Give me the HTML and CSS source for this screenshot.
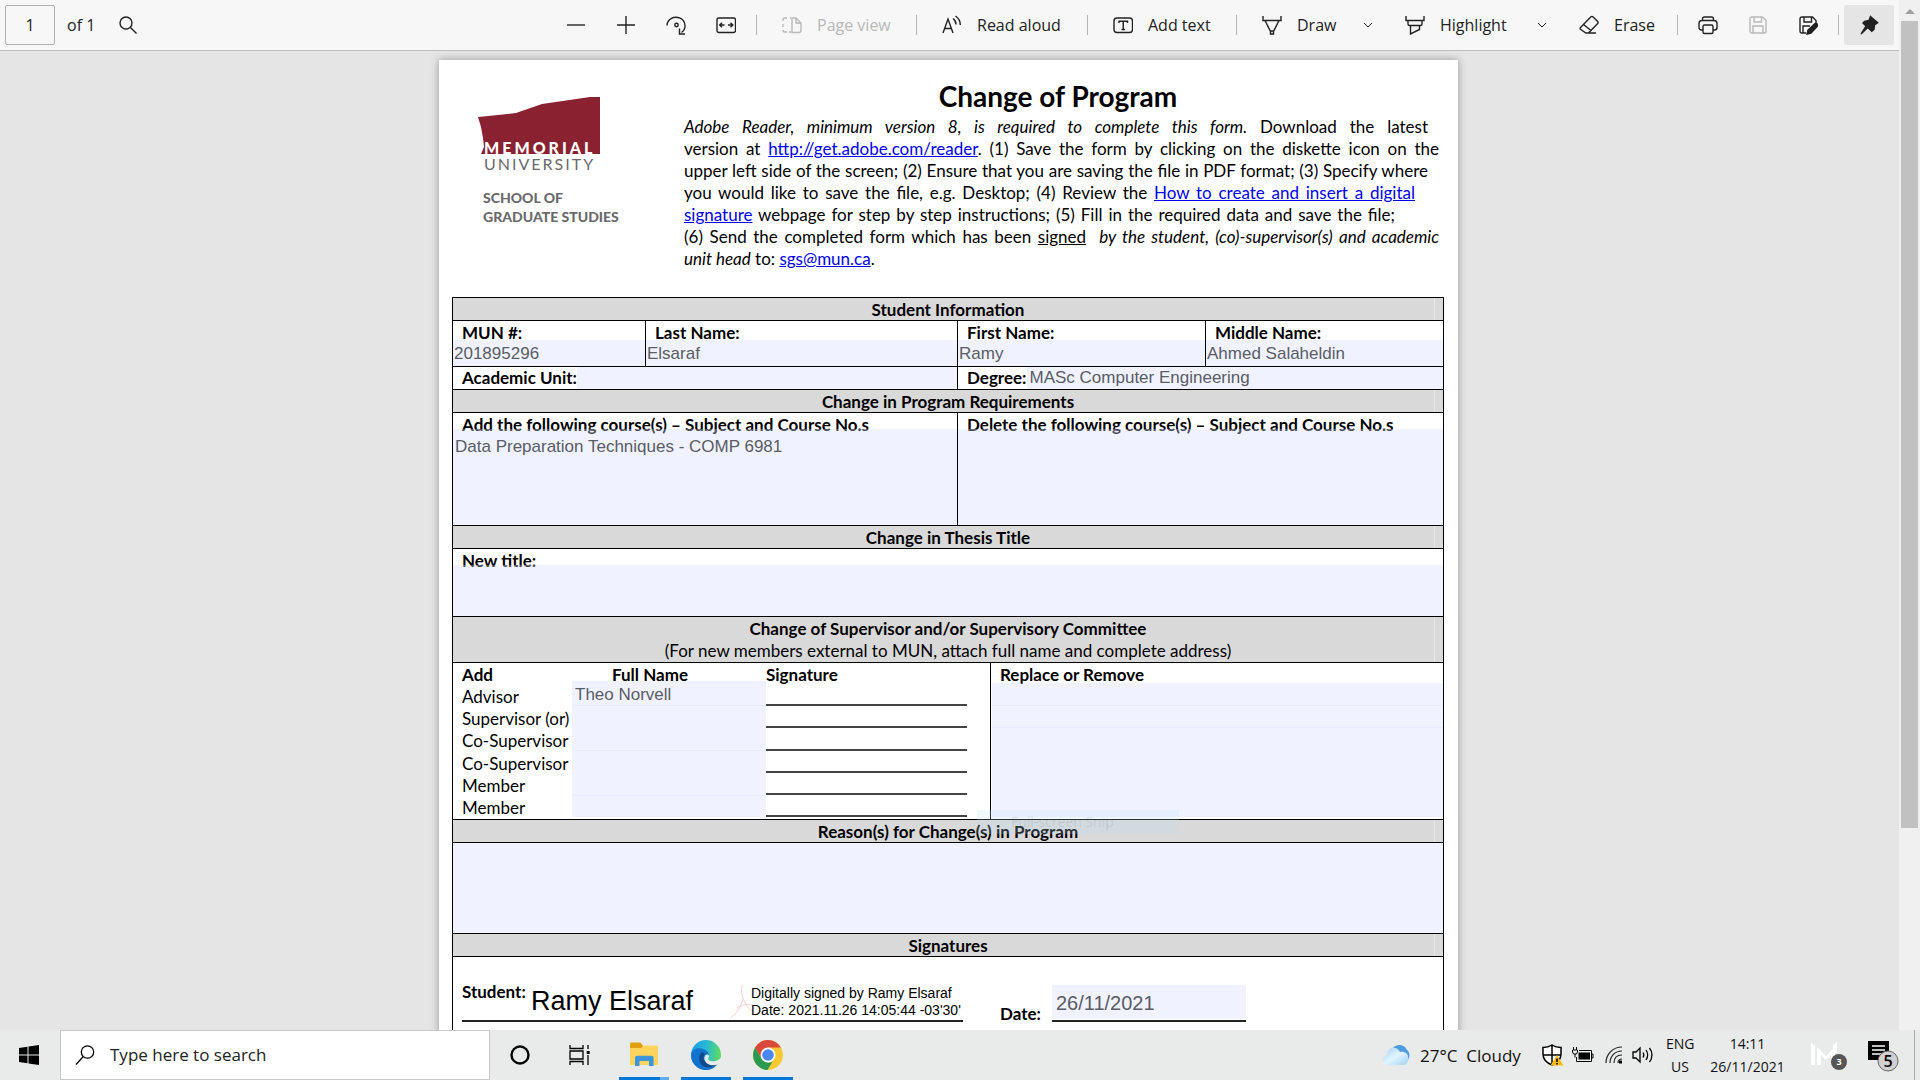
FILE: index.html
```html
<!DOCTYPE html>
<html lang="en">
<head>
<meta charset="utf-8">
<title>Change of Program</title>
<link rel="stylesheet" href="styles.css">
</head>
<body>
<div class="screen">
  <div class="browser">
    <div class="viewer">
      <header class="toolbar">
        <input class="page-number" type="text" value="1" aria-label="Page number">
        <span class="page-total">of 1</span>
        <button class="find" aria-label="Find"><svg viewBox="0 0 20 20"><circle cx="8" cy="8" r="6"/><path d="M12.500 12.500 18.500 18.500"/></svg></button>
        <div class="tools">
          <button class="tool" aria-label="Zoom out"><svg viewBox="0 0 20 20"><path d="M1 10h18"/></svg></button>
          <button class="tool" aria-label="Zoom in"><svg viewBox="0 0 20 20"><path d="M1 10h18M10 1v18"/></svg></button>
          <button class="tool" aria-label="Rotate"><svg viewBox="0 0 20 20"><path d="M1 10.500A9 8.500 0 1 1 15.500 17.500M13.500 13.500V19H19"/><circle cx="10.500" cy="10" r="1.700"/></svg></button>
          <button class="tool" aria-label="Fit to width"><svg viewBox="0 0 20 20"><rect x="1" y="3" width="18.500" height="14.500" rx="2"/><path d="M4 10h4.500M6 7.700 3.700 10 6 12.300M16.500 10H12M14.500 7.700 16.800 10 14.500 12.300"/></svg></button>
          <span class="sep"></span>
          <button class="tool text w-view" disabled><svg viewBox="0 0 20 20"><path d="M9 3H8M5 3H3a2 2 0 0 0-2 2v1M1 9v3M1 15a2 2 0 0 0 2 2h2M7 17h2M10 3h4l5 5v7.500a2 2 0 0 1-2 2h-7zM14 3v5h5"/></svg>Page view</button>
          <span class="sep"></span>
          <button class="tool text w-read"><svg viewBox="0 0 20 20"><path d="M1 18 6 4l5 14M2.600 13.500h6.800M11 3.500c2 1.500 3 3.500 3 6M13.500 1c3 2 4.800 5 4.800 9"/></svg>Read aloud</button>
          <span class="sep"></span>
          <button class="tool text w-add"><svg viewBox="0 0 20 20"><rect x="1" y="3" width="18.500" height="14.500" rx="3"/><path d="M6 8V6.200h8.500V8M10.250 6.200v8.300M8.500 14.500h3.500"/></svg>Add text</button>
          <span class="sep"></span>
          <button class="tool text w-draw"><svg viewBox="0 0 20 20"><path d="M1 1v4.500h18V1M3 5.500l5.500 11V19h3v-2.500l5.500-11M8.500 16h3"/></svg>Draw</button>
          <button class="tool chev" aria-label="Draw options"><svg viewBox="0 0 10 10"><path d="M1 3l4 4 4-4"/></svg></button>
          <button class="tool text w-mark"><svg viewBox="0 0 20 20"><path d="M1 1v4.500h18V1M3 5.500v3.500c0 1 .6 1.500 1.500 1.500h11c.9 0 1.500-.5 1.500-1.500V5.500M5.500 10.500V19l9-4.500v-4"/></svg>Highlight</button>
          <button class="tool chev" aria-label="Highlight options"><svg viewBox="0 0 10 10"><path d="M1 3l4 4 4-4"/></svg></button>
          <button class="tool text w-erase"><svg viewBox="0 0 20 20"><path d="M1.500 12.500 12 1.800c.6-.6 1.300-.6 1.900 0l4.800 4.700c.6.600.6 1.300 0 1.900L9.500 18H6.800l-5.300-3.700c-.6-.5-.6-1.200 0-1.800zM4.500 9.500l7.500 6M7 18h10"/></svg>Erase</button>
          <span class="sep"></span>
          <button class="tool" aria-label="Print"><svg viewBox="0 0 20 20"><path d="M5 15H3.500C2 15 1 14 1 12.500V8.500C1 6.500 2 5.500 4 5.500h12c2 0 3 1 3 3v4c0 1.500-1 2.500-2.500 2.500H15M4.500 5.500V4c0-1.500.7-2 2-2h7c1.300 0 2 .5 2 2v1.500"/><rect x="5" y="10" width="10" height="8.500" rx="1.500"/></svg></button>
          <button class="tool" aria-label="Save" disabled><svg viewBox="0 0 20 20"><path d="M2 4c0-1.300.7-2 2-2h10.500L18 5.500V16c0 1.300-.7 2-2 2H4c-1.300 0-2-.7-2-2zM6 2v5h7.500V2M5 18v-7h10v7"/></svg></button>
          <button class="tool" aria-label="Save as"><svg viewBox="0 0 20 20"><path d="M8 18H4c-1.300 0-2-.7-2-2V4c0-1.300.7-2 2-2h10.500L18 5.500V8M6 2v5h7.500V2M5 18v-7h7"/><path class="solid" d="m9 19 1-4 7-6.500c1.500-.8 3.500 1 2.300 2.700L13 18z"/></svg></button>
          <span class="sep"></span>
          <button class="tool pinned" aria-label="Unpin toolbar"><svg viewBox="0 0 20 20"><path class="solid" d="M11.500 1.500 18.700 7.700 15.500 10 15 14.500l-2.200 1.800-4-3.800L2 19l5-8-3-3L5.500 6.500l4.500-1z"/></svg></button>
        </div>
      </header>

      <main class="document">
        <form class="sheet">
          <div class="masthead">
            <div class="brand">
              <svg class="logo" viewBox="0 0 124 76" role="img" aria-label="Memorial University">
                <path fill="#8a2131" d="M0 20 20 18 38 16 64 7 112 0H122V57H3L6 50 5 41 3 30z"/>
                <text class="logo-top" x="6" y="57">MEMORIAL</text>
                <text class="logo-low" x="6" y="73">UNIVERSITY</text>
              </svg>
              <p class="school">SCHOOL OF<br>GRADUATE STUDIES</p>
            </div>
            <div class="intro">
              <h1>Change of Program</h1>
              <p class="lines">
                <span class="line mid"><i>Adobe Reader, minimum version 8, is required to complete this form.</i> Download the latest</span>
                <span class="line full">version at <a href="#reader">http://get.adobe.com/reader</a>. (1) Save the form by clicking on the diskette icon on the</span>
                <span class="line mid">upper left side of the screen; (2) Ensure that you are saving the file in PDF format; (3) Specify where</span>
                <span class="line short">you would like to save the file, e.g. Desktop; (4) Review the <a href="#how">How to create and insert a digital</a></span>
                <span class="line least"><a href="#how">signature</a> webpage for step by step instructions; (5) Fill in the required data and save the file;</span>
                <span class="line full">(6) Send the completed form which has been <u>signed</u>&nbsp; <i>by the student, (co)-supervisor(s) and academic</i></span>
                <span class="line last"><i>unit head</i> to: <a href="#mail">sgs@mun.ca</a>.</span>
              </p>
            </div>
          </div>

          <div class="form">
            <h2>Student Information</h2>
            <div class="row names">
              <div class="cell"><label for="mun">MUN #:</label><input id="mun" class="field" value="201895296"></div>
              <div class="cell"><label for="last">Last Name:</label><input id="last" class="field" value="Elsaraf"></div>
              <div class="cell"><label for="first">First Name:</label><input id="first" class="field" value="Ramy"></div>
              <div class="cell"><label for="middle">Middle Name:</label><input id="middle" class="field" value="Ahmed Salaheldin"></div>
            </div>
            <div class="row halves unit">
              <div class="cell inline"><label for="unit">Academic Unit:</label><input id="unit" class="field"></div>
              <div class="cell inline"><label for="degree">Degree:</label><input id="degree" class="field" value="MASc Computer Engineering"></div>
            </div>
            <h2>Change in Program Requirements</h2>
            <div class="row halves courses">
              <div class="cell"><label for="add">Add the following course(s) – Subject and Course No.s</label><textarea id="add" class="field">Data Preparation Techniques - COMP 6981</textarea></div>
              <div class="cell"><label for="del">Delete the following course(s) – Subject and Course No.s</label><textarea id="del" class="field"></textarea></div>
            </div>
            <h2>Change in Thesis Title</h2>
            <div class="row thesis">
              <div class="cell"><label for="title">New title:</label><textarea id="title" class="field"></textarea></div>
            </div>
            <h2 class="tall">Change of Supervisor and/or Supervisory Committee<br><span class="note">(For new members external to MUN, attach full name and complete address)</span></h2>
            <div class="row committee">
              <div class="members">
                <b>Add</b><b class="fullname">Full Name</b><b>Signature</b>
                <span>Advisor</span><span class="rule"></span>
                <span>Supervisor (or)</span><span class="rule"></span>
                <span>Co-Supervisor</span><span class="rule"></span>
                <span>Co-Supervisor</span><span class="rule"></span>
                <span>Member</span><span class="rule"></span>
                <span>Member</span><span class="rule"></span>
                <div class="stack">
                  <input class="field" aria-label="Advisor name" value="Theo Norvell">
                  <textarea class="field" aria-label="Supervisor name"></textarea>
                  <textarea class="field" aria-label="Co-Supervisor name"></textarea>
                  <input class="field" aria-label="Member name">
                </div>
              </div>
              <div class="cell replace">
                <b class="caption">Replace or Remove</b>
                <div class="stack">
                  <input class="field" aria-label="Replace advisor">
                  <input class="field" aria-label="Replace supervisor">
                  <textarea class="field" aria-label="Replace others"></textarea>
                </div>
              </div>
              <span class="snip">Full-screen Snip</span>
            </div>
            <h2>Reason(s) for Change(s) in Program</h2>
            <div class="row reasons"><textarea class="field" aria-label="Reasons for change"></textarea></div>
            <h2>Signatures</h2>
            <div class="row signing">
              <div class="signed">
                <b>Student:</b>
                <span class="signer">Ramy Elsaraf</span>
                <svg class="mark" viewBox="0 0 24 34"><path d="M13 0c-2 10 3 20 9 26M14 14C12 22 7 30 1 33M8 23c5-3 10-4 15-3"/></svg>
                <span class="stamp">Digitally signed by Ramy Elsaraf<br>Date: 2021.11.26 14:05:44 -03'30'</span>
              </div>
              <label for="date">Date:</label>
              <div class="dated"><input id="date" class="field" value="26/11/2021"></div>
            </div>
          </div>
        </form>
      </main>
    </div>
    <div class="scrollbar"><span class="arrow"></span><span class="thumb"></span></div>
  </div>

  <footer class="taskbar">
    <button class="start" aria-label="Start"><svg viewBox="0 0 20 20"><path d="M0 3 8.500 1.800V9.500H0zM9.500 1.600 20 0V9.500H9.500zM0 10.500H8.500V18.200L0 17zM9.500 10.500H20V20L9.500 18.400z"/></svg></button>
    <label class="search"><svg viewBox="0 0 20 20"><circle cx="12.500" cy="7" r="6.200"/><path d="M8.300 11.500 1 19.500"/></svg><input type="text" placeholder="Type here to search" aria-label="Search"></label>
    <button class="task" aria-label="Cortana"><svg viewBox="0 0 22 22"><circle cx="11" cy="11" r="8.500" fill="none" stroke="#000" stroke-width="2.400"/></svg></button>
    <button class="task" aria-label="Task view"><svg viewBox="0 0 22 22"><path fill="none" stroke="#000" stroke-width="1.300" d="M1 1v3.500h13V1M1 21v-3.500h13V21M1 7h13v8H1zM19 1v4M19 11v10"/><path d="M17.700 7h3v3h-3z"/></svg></button>
    <div class="apps">
      <button class="app multi" aria-label="File Explorer"><svg viewBox="0 0 30 30"><path fill="#e0a010" d="M1 4c0-1 .5-1.500 1.500-1.500h9L14 6v5H1z"/><path fill="#ffd45c" d="M1 8h11l3-2.500h12.500c1 0 1.500.5 1.500 1.500v18H1z"/><path fill="#3c96dc" d="M6 26v-8c0-1.500.8-2.300 2.300-2.300h14c1.500 0 2.300.8 2.300 2.300v8H20v-5h-9.500v5z"/></svg></button>
      <button class="app" aria-label="Microsoft Edge"><svg viewBox="0 0 30 30"><defs><linearGradient id="e1" x1="0" y1=".3" x2="1" y2=".4"><stop offset="0" stop-color="#1b9de2"/><stop offset=".5" stop-color="#28b9d8"/><stop offset="1" stop-color="#5fdd5c"/></linearGradient></defs><circle cx="15" cy="15" r="15" fill="url(#e1)"/><path fill="#1173ce" d="M0 15C1 9 7 7 12 9c4 1.500 6 4 6 6-2-1-5 0-5 4 0 5 6 8 13 5-4 7-14 8-20 3-4-3-6-7-6-12z"/><path fill="#114a8b" d="M11 12c-3 3-4 8-1 12 3 4 10 5 16 0-6 2-13-1-13.500-6 0-2 .5-3 1.500-4z"/><path fill="#e9eaea" d="M14.500 15c2.500-1.500 4.500.5 3 3-.8 2 1.500 3.500 5 3.300 3 0 5-1.300 6-2.300l1.500-1v4l-3.500 2.500c-5 1.800-11 .5-12.500-4-.7-2-.5-4 .5-5.500z"/></svg></button>
      <button class="app" aria-label="Google Chrome"><svg viewBox="0 0 28 28"><circle cx="14" cy="14" r="14" fill="#fbc934"/><path fill="#d9483b" d="M1.900 7A14 14 0 0 1 26.100 7H14l-6 10.500z"/><path fill="#2a9a50" d="M1.900 7 8 17.500l6 3.500 4-.5L13.500 28A14 14 0 0 1 1.900 7z"/><circle cx="14" cy="14" r="7" fill="#fff"/><circle cx="14" cy="14" r="5.400" fill="#4a87f0"/></svg></button>
    </div>
    <div class="tray">
      <div class="weather"><svg viewBox="0 0 28 22"><defs><linearGradient id="c1" x1="0" y1="0" x2="1" y2="1"><stop offset="0" stop-color="#9fd0f5"/><stop offset=".5" stop-color="#e2f4fe"/><stop offset="1" stop-color="#9ed2f5"/></linearGradient></defs><path fill="#4f9be0" d="M10 6C12 0 22-1 25 6c4 3 3 10-2 12z"/><path fill="url(#c1)" d="M7 21C-1 21-1 12 5 11 5 3 15 1 18 8c6-1 9 3 8 7 0 4-2 6-5 6z"/></svg><span>27°C&nbsp; Cloudy</span></div>
      <div class="t-shield"><svg viewBox="0 0 22 22"><path fill="#fff" stroke="#000" stroke-width="1.500" d="M10 1c3 2 6 2.500 9 2.500V10c0 5-4 9-9 11-5-2-9-6-9-11V3.500C4 3.500 7 3 10 1zM10 1v20M1 11h18"/><path fill="#fcba12" d="M15 11 21.500 21.500h-13z"/><path stroke="#000" stroke-width="1.500" d="M15 14.500v3.500M15 19v1.500"/></svg></div>
      <div class="t-battery"><svg viewBox="0 0 22 18"><path d="M6.500 6.500H18v7H6.500z"/><path fill="none" stroke="#000" d="M7 4.500h12.500v11h-15V11M19.500 8H21v4h-1.500M1.500 1v3M4.500 1v3M.5 4h5v2L4.500 8h-3L.5 6zM3 8v3.500"/></svg></div>
      <div class="t-wifi"><svg viewBox="0 0 18 18"><g fill="none" stroke="#222" stroke-width="1.200"><path d="M1 17C1 8 8 1 17 1M5 17C5 10 10 5 17 5M9 17C9 12 12 9 17 9M13 17c0-2.500 1.500-4 4-4"/></g><path d="M14 14.500h3v3h-3z"/></svg></div>
      <div class="t-sound"><svg viewBox="0 0 22 18"><path fill="none" stroke="#000" stroke-width="1.300" d="M1 6h3l4-4v14l-4-4H1zM11 6.500c1 1.500 1 3.500 0 5M14 4c2 3 2 7 0 10M17.500 2c3.300 4 3.300 10 0 14"/></svg></div>
      <div class="lang">ENG<br>US</div>
      <div class="clock">14:11<br>26/11/2021</div>
      <div class="t-mail"><svg viewBox="0 0 38 30"><path fill="#fff" d="M0 3l4 3v19H0zM6 25V7l9 9 9-9v14h-4v-6l-5 5-5-5v10zM22 5l4-3v11h-4z"/><circle cx="28" cy="22" r="8" fill="#555"/><text class="tiny" x="28" y="25">3</text></svg></div>
      <div class="t-notes"><svg viewBox="0 0 32 34"><path d="M1 3h21v19h-5l-4 4v-4H1z"/><path stroke="#fff" stroke-width="1.400" d="M5 8h13M5 12h13M5 16h9"/><circle cx="21" cy="23" r="10" fill="#d0d0d0" stroke="#666"/><text class="count" x="21" y="29">5</text></svg></div>
      <button class="peek" aria-label="Show desktop"></button>
    </div>
  </footer>
</div>
</body>
</html>
```
FILE: styles.css
```css
* { box-sizing: border-box; }
body { margin: 0; font-family: "Open Sans", "Noto Sans", sans-serif; color: #222; }
button { font: inherit; color: inherit; border: 0; background: none; padding: 0; }
input, textarea { font: inherit; color: inherit; border: 0; padding: 0; min-width: 0; resize: none; }
svg { display: block; flex: none; }

.screen { height: 100vh; display: flex; flex-direction: column; overflow: hidden; }
.browser { flex: 1; min-height: 0; display: flex; }
.viewer { flex: 1; min-width: 0; display: flex; flex-direction: column; background: #e5e5e5; }

/* PDF toolbar */
.toolbar { flex: none; height: 51px; display: flex; align-items: center; background: #f7f7f7; border-bottom: 1px solid #bdbdbd; padding: 0 5px; font-size: 16px; }
.toolbar svg { width: 20px; height: 20px; fill: none; stroke: currentColor; stroke-width: 1.4; }
.toolbar .solid { fill: currentColor; }
.page-number { width: 50px; height: 40px; border: 1px solid #b0b0b0; border-radius: 2px; background: #f7f7f7; text-align: center; }
.page-total { margin-left: 12px; }
.find { margin-left: 23px; }
.tools { margin-left: auto; display: flex; align-items: center; }
.tool { width: 50px; height: 40px; display: flex; align-items: center; justify-content: center; white-space: nowrap; }
.tool:disabled { color: #b8b8b8; }
.tool.text { justify-content: flex-start; gap: 15px; padding-left: 20px; }
.tool.chev { width: 35px; }
.toolbar .chev svg { width: 10px; height: 10px; stroke-width: 1; }
.w-view { width: 149px; }
.w-read { width: 160px; }
.w-add { width: 138px; }
.w-draw { width: 108px; }
.w-mark { width: 139px; }
.w-erase { width: 113px; }
.pinned { background: #e5e5e5; border-radius: 2px; }
.sep { width: 1px; height: 20px; margin: 0 5px; background: #b5b5b5; }

.scrollbar { width: 21px; background: #f0f0f0; display: flex; flex-direction: column; align-items: center; padding-top: 9px; }
.arrow { border: 5px solid transparent; border-top: 0; border-bottom-color: #a0a0a0; }
.thumb { width: 17px; height: 79%; margin-top: 7px; background: #c1c1c1; }

/* sheet */
.document { flex: 1; min-height: 0; overflow: hidden; padding: 9px 2px 0 0; }
.sheet { width: 1019px; max-width: 100%; min-height: 1320px; margin: 0 auto; padding: 0 14px 0 13px; background: #fff; box-shadow: 0 0 8px rgba(0, 0, 0, .35); font-family: Lato, sans-serif; font-size: 17px; line-height: 22px; color: #000; }
.masthead { display: flex; height: 237px; }
.brand { width: 232px; padding: 37px 0 0 26px; }
.logo { width: 124px; height: 76px; }
.logo-top, .logo-low { font-size: 16px; letter-spacing: 2px; }
.logo-top { fill: #fff; font-weight: 900; letter-spacing: 3px; }
.logo-low { fill: #6a6a6d; }
.school { margin: 15px 0 0 5px; font-size: 14px; line-height: 19px; font-weight: 900; color: #6a6a6d; }
.intro { flex: 1; }
h1 { max-width: 748px; margin: 18px 0 2px; font-size: 28px; line-height: 36px; text-align: center; }
.lines { margin: 0; font-size: 17px; }
.line { display: block; white-space: nowrap; text-align-last: justify; }
.full { width: 755px; }
.mid { width: 744px; }
.short { width: 731px; }
.least { width: 711px; }
.last { text-align-last: left; }
a { color: #0000ee; }

/* form grid */
.form { border: 1px solid #000; border-top: 0; }
h2 { margin: 0; height: 23px; border-top: 1px solid #000; font-size: 17px; line-height: 24px; text-align: center; background: linear-gradient(#e6e6e6, #e6e6e6) right 8px top / 1px 100% no-repeat #d9d9d9; }
.tall { height: 46px; padding-top: 1px; line-height: 22px; }
.note { font-weight: 400; }
.row { border-top: 1px solid #000; display: grid; position: relative; }
.cell { display: flex; flex-direction: column; min-width: 0; }
.cell + .cell, .replace { border-left: 1px solid #000; }
label, .caption { display: block; padding-left: 9px; font-weight: 700; line-height: 24px; white-space: nowrap; }
.field { position: relative; border-radius: 0; outline: 0; display: block; width: 100%; background: rgba(212, 221, 255, .35); color: #5a5c66; font-family: "Liberation Sans", Arial, sans-serif; font-size: 17px; line-height: 20px; padding: 0 1px; }
.names { grid-template-columns: 192fr 312fr 248fr 238fr; height: 46px; }
.names .field { height: 27px; margin-top: -5px; }
.halves { grid-template-columns: 504fr 486fr; }
.unit { height: 23px; }
.unit label { line-height: 22px; }
.inline { flex-direction: row; }
.inline .field { flex: 1; height: 22px; padding-left: 3px; }
.courses { height: 113px; }
.courses .field, .thesis .field { flex: 1; margin-top: -8px; padding: 8px 2px 0; }
.thesis { height: 68px; }
.committee { height: 157px; grid-template-columns: 537fr 453fr; }
.members { display: grid; grid-template-columns: 110px 194px 1fr; grid-template-rows: repeat(7, 1fr); padding: 1px 0 0 9px; white-space: nowrap; }
.fullname { padding-left: 40px; }
.members span { grid-column: 1; }
.members .rule { grid-column: 3; width: 201px; border-bottom: 2px solid #444; margin-bottom: 2px; }
.members .stack { grid-column: 2; grid-row: 2 / -1; margin: -5px 0 2px; min-height: 0; }
.stack { display: flex; flex-direction: column; }
.stack .field { flex: 22 1 0; min-height: 0; height: 0; }
.members .stack .field:first-child { padding: 3px 3px 0; }
.stack .field + .field { border-top: 1px solid #e8eaff; }
.stack textarea.field { flex: 45 1 0; }
.replace .stack { flex: 1; margin: -4px 0 2px 1px; }
.replace .stack textarea.field { flex: 90 1 0; }
.snip { position: absolute; left: 524px; top: 147px; z-index: 2; width: 202px; height: 24px; padding-left: 34px; background: rgba(190, 225, 245, .22); font-family: "Open Sans", sans-serif; font-size: 14px; line-height: 24px; color: rgba(90, 90, 100, .16); }
.reasons { height: 91px; }
.signing { height: 300px; display: flex; align-items: flex-start; padding: 28px 0 0 9px; }
.signed { display: flex; width: 501px; height: 37px; border-bottom: 2px solid #222; white-space: nowrap; }
.signed b { width: 69px; line-height: 14px; }
.signer { width: 198px; font: 27px/32px "Liberation Sans", Arial, sans-serif; }
.mark { width: 24px; height: 34px; fill: none; stroke: #f8cfcf; }
.stamp { font: 14px/17px "Liberation Sans", Arial, sans-serif; margin-left: -2px; }
.signing label { padding: 17px 0 0 37px; width: 89px; }
.dated { width: 194px; height: 37px; border-bottom: 2px solid #222; }
.dated .field { height: 34px; font-size: 20px; padding: 3px 4px 0; }

/* taskbar */
.taskbar { flex: none; height: 50px; display: flex; background: #e9eaea; color: #111; }
.start { width: 60px; padding-left: 19px; }
.start svg { width: 20px; height: 20px; }
.search { width: 430px; max-width: 25%; display: flex; align-items: center; gap: 15px; padding: 0 14px; background: #fff; border: 1px solid #c8c8c8; font-weight: 400; }
.search svg { width: 20px; height: 20px; fill: none; stroke: #000; stroke-width: 1.3; }
.search input { flex: 1; font-size: 17px; outline: 0; }
.search input::placeholder { color: #222; opacity: 1; }
.task { width: 60px; display: grid; place-items: center; }
.task svg { width: 22px; height: 22px; }
.apps { display: flex; margin-left: 3px; }
.app { width: 62px; display: flex; flex-direction: column; align-items: center; justify-content: space-between; padding-top: 10px; }
.app svg { width: 30px; height: 30px; }
.app::after { content: ""; width: 50px; height: 3px; background: #0078d7; }
.multi::after { background: linear-gradient(90deg, #0078d7 41px, #62aee8 41px); }
.tray { margin-left: auto; display: flex; align-items: center; font-size: 14px; line-height: 23px; white-space: nowrap; }
.weather { width: 160px; display: flex; align-items: center; gap: 10px; font-size: 17px; }
.weather svg { width: 28px; height: 22px; }
.t-shield { width: 30px; }
.t-shield svg { width: 22px; height: 22px; }
.t-battery { width: 33px; }
.t-battery svg { width: 22px; height: 18px; }
.t-wifi { width: 27px; }
.t-wifi svg { width: 18px; height: 18px; }
.t-sound { width: 34px; }
.t-sound svg { width: 22px; height: 18px; }
.lang { width: 28px; text-align: center; }
.clock { width: 107px; text-align: center; }
.t-mail { width: 58px; padding-left: 10px; }
.t-mail svg { width: 38px; height: 30px; }
.t-notes { width: 55px; padding-left: 8px; }
.t-notes svg { width: 32px; height: 34px; }
.tiny { font-size: 9px; font-weight: 700; fill: #fff; text-anchor: middle; }
.count { font-size: 16px; font-weight: 600; text-anchor: middle; }
.peek { width: 6px; align-self: stretch; border-left: 1px solid #aaa; }
```
